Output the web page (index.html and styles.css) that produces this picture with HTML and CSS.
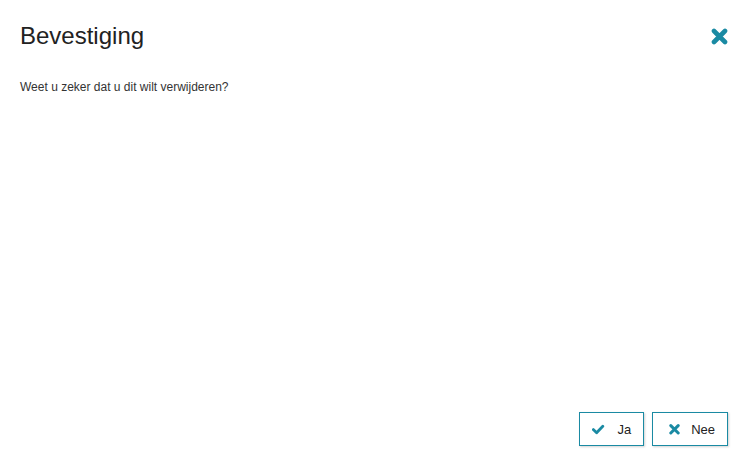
FILE: index.html
```html
<!DOCTYPE html>
<html lang="nl">
<head>
<meta charset="utf-8">
<title>Bevestiging</title>
<link rel="stylesheet" href="styles.css">
</head>
<body>
<div class="dialog">
  <div class="dialog-header">
    <h1 class="dialog-title">Bevestiging</h1>
    <button class="close-btn" aria-label="Sluiten">
      <svg width="17" height="17" viewBox="0 0 17 17"><path d="M3 3 L14 14 M14 3 L3 14" stroke="#1a8aa3" stroke-width="4.6" stroke-linecap="round"/></svg>
    </button>
  </div>
  <div class="dialog-body">
    <p class="message">Weet u zeker dat u dit wilt verwijderen?</p>
  </div>
  <div class="dialog-footer">
    <button class="btn">
      <svg class="btn-icon" width="14" height="14" viewBox="0 0 14 14"><path d="M1.3 7.6 L4.6 10.8 L10.8 4.3" fill="none" stroke="#1a8aa3" stroke-width="2.8" stroke-linecap="round" stroke-linejoin="round"/></svg>
      <span>Ja</span>
    </button>
    <button class="btn btn-wide">
      <svg class="btn-icon" width="14" height="14" viewBox="0 0 14 14"><path d="M4.8 3.6 L12.2 11 M12.2 3.6 L4.8 11" stroke="#1a8aa3" stroke-width="3" stroke-linecap="round"/></svg>
      <span>Nee</span>
    </button>
  </div>
</div>
</body>
</html>
```
FILE: styles.css
```css
html, body {
  margin: 0;
  padding: 0;
  height: 100%;
  background: #ffffff;
}
body {
  font-family: "Liberation Sans", Arial, sans-serif;
  color: #333333;
}
.dialog {
  box-sizing: border-box;
  height: 100%;
  display: flex;
  flex-direction: column;
  padding: 23px 20px 15px 20px;
}
.dialog-header {
  display: flex;
  align-items: center;
  justify-content: space-between;
}
.dialog-title {
  margin: 0;
  font-size: 24px;
  line-height: 26px;
  font-weight: normal;
  color: #222222;
}
.close-btn {
  border: none;
  background: none;
  padding: 0;
  margin: 0;
  width: 17px;
  height: 17px;
  display: block;
  cursor: pointer;
}
.close-btn svg {
  display: block;
}
.dialog-body {
  flex: 1;
  padding-top: 30px;
}
.message {
  margin: 0;
  font-size: 12px;
  line-height: 16px;
  color: #333333;
}
.dialog-footer {
  display: flex;
  justify-content: flex-end;
  gap: 8px;
}
.btn {
  display: flex;
  align-items: center;
  height: 34px;
  box-sizing: border-box;
  padding: 0 12px;
  border: 1px solid #1a8aa3;
  background: #ffffff;
  box-shadow: 1px 1px 2px rgba(0, 0, 0, 0.18);
  font-family: "Liberation Sans", Arial, sans-serif;
  font-size: 13px;
  color: #222222;
  cursor: pointer;
}
.btn-wide {
  padding-left: 13px;
}
.btn-icon {
  display: block;
  margin-right: 11px;
}
```
